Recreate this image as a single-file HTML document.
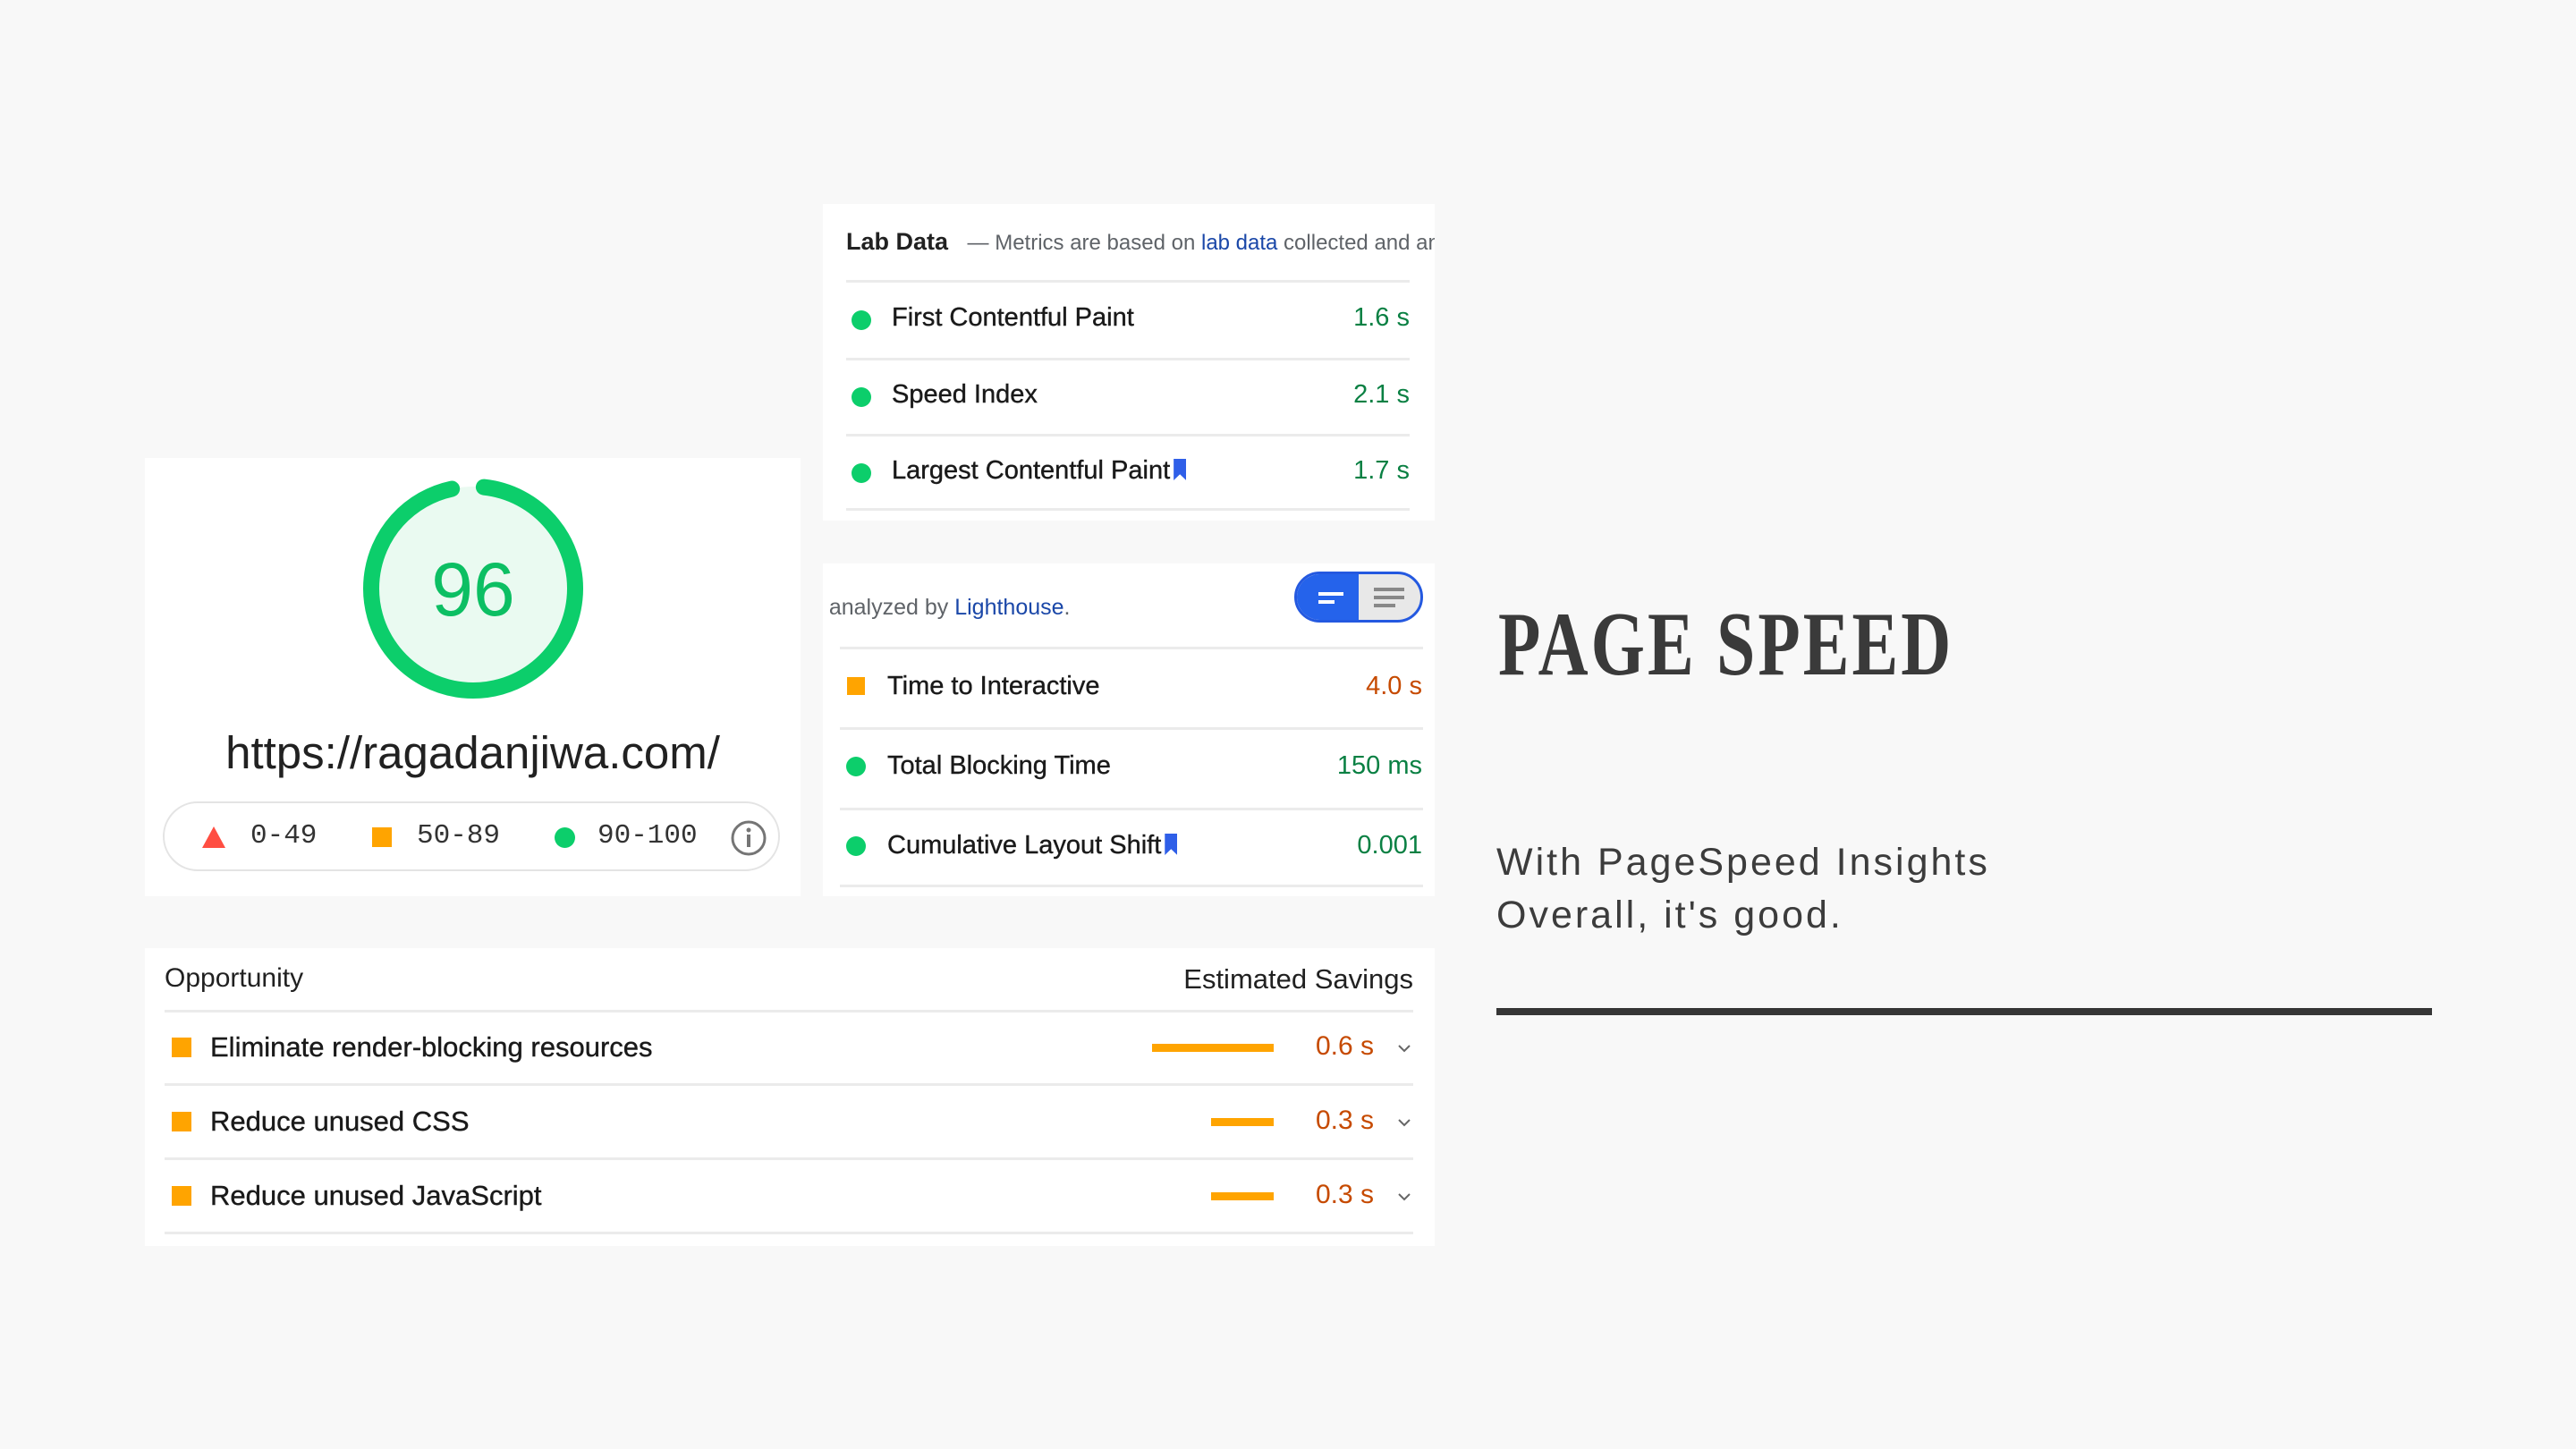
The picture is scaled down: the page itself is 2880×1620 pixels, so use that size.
<!DOCTYPE html>
<html><head><meta charset="utf-8"><style>
body{margin:0;width:2880px;height:1620px;background:#f8f8f8;position:relative;overflow:hidden;font-family:"Liberation Sans",sans-serif;color:#212121}
.card{position:absolute;background:#fff}
.abs{position:absolute;white-space:nowrap}
.sep{position:absolute;height:3px;background:#ebebeb}
.dot{position:absolute;width:22px;height:22px;border-radius:50%;background:#0cce6b}
.sq{position:absolute;width:20px;height:20px;background:#ffa400}
.lbl{position:absolute;font-size:29px;color:#1a1a1a;white-space:nowrap;-webkit-text-stroke:0.4px #1a1a1a}
.val{position:absolute;font-size:29px;white-space:nowrap;text-align:right}
.g{color:#0a8043}.o{color:#c64a00}
.bm{display:inline-block;width:14px;height:24px;background:#2f5fe8;margin-left:4px;vertical-align:-2px;clip-path:polygon(0 0,100% 0,100% 100%,50% 72%,0 100%)}
</style></head><body>

<!-- score card -->
<div class="card" style="left:162px;top:512px;width:733px;height:490px">
<svg class="abs" style="left:242px;top:20px" width="250" height="250" viewBox="0 0 250 250">
<circle cx="125" cy="126" r="114" fill="#eafaf1"/>
<circle cx="125" cy="126" r="114" fill="none" stroke="#0cce6b" stroke-width="18" stroke-linecap="round" stroke-dasharray="680 80" transform="rotate(-84 125 126)"/>
<text x="125" y="156" text-anchor="middle" font-family="Liberation Sans" font-size="84" fill="#0cbf63">96</text>
</svg>
<div class="abs" style="left:0;width:733px;text-align:center;top:300px;font-size:51px;color:#212121">https://ragadanjiwa.com/</div>
<div class="abs" style="left:20px;top:384px;width:690px;height:78px;border:2px solid #e4e4e4;border-radius:42px;box-sizing:border-box;font-family:'Liberation Mono',monospace;font-size:31px;color:#333">
<svg class="abs" style="left:42px;top:26px" width="26" height="24"><polygon points="13,0 26,24 0,24" fill="#ff4e42"/></svg>
<span class="abs" style="left:96px;top:19px">0-49</span>
<div class="abs" style="left:232px;top:27px;width:22px;height:22px;background:#ffa400"></div>
<span class="abs" style="left:282px;top:19px">50-89</span>
<div class="abs" style="left:436px;top:27px;width:23px;height:23px;border-radius:50%;background:#0cce6b"></div>
<span class="abs" style="left:484px;top:19px">90-100</span>
<svg class="abs" style="left:632px;top:18px" width="42" height="42"><circle cx="21" cy="21" r="18" fill="none" stroke="#757575" stroke-width="3"/><rect x="19" y="17" width="4" height="14" fill="#757575"/><circle cx="21" cy="12" r="2.5" fill="#757575"/></svg>
</div>
</div>

<!-- lab data -->
<div class="card" style="left:920px;top:228px;width:684px;height:354px;overflow:hidden">
<div class="abs" style="left:26px;top:27px;font-size:27px;font-weight:bold;color:#212121">Lab Data <span style="font-weight:normal;font-size:24px;color:#5f6368;margin-left:14px">— Metrics are based on <span style="color:#1a47a8">lab data</span> collected and analyzed</span></div>
<div class="sep" style="left:26px;top:85px;width:630px"></div>
<div class="dot" style="left:32px;top:119px"></div><div class="lbl" style="left:77px;top:111px">First Contentful Paint</div><div class="val g" style="right:28px;top:111px">1.6 s</div>
<div class="sep" style="left:26px;top:172px;width:630px"></div>
<div class="dot" style="left:32px;top:205px"></div><div class="lbl" style="left:77px;top:197px">Speed Index</div><div class="val g" style="right:28px;top:197px">2.1 s</div>
<div class="sep" style="left:26px;top:257px;width:630px"></div>
<div class="dot" style="left:32px;top:290px"></div><div class="lbl" style="left:77px;top:282px">Largest Contentful Paint<span class="bm"></span></div><div class="val g" style="right:28px;top:282px">1.7 s</div>
<div class="sep" style="left:26px;top:340px;width:630px"></div>
</div>

<!-- second card -->
<div class="card" style="left:920px;top:630px;width:684px;height:372px;overflow:hidden">
<div class="abs" style="left:-14px;top:35px;font-size:25px;color:#5f6368">d analyzed by <span style="color:#1a47a8">Lighthouse</span>.</div>
<div class="abs" style="left:527px;top:9px;width:144px;height:57px;border-radius:29px;border:3px solid #2459e0;box-sizing:border-box;overflow:hidden;background:#e8e8e8">
<div class="abs" style="left:0;top:0;width:69px;height:51px;background:#2563eb"></div>
<div class="abs" style="left:24px;top:20px;width:28px;height:4px;background:#fff"></div>
<div class="abs" style="left:24px;top:29px;width:18px;height:4px;background:#fff"></div>
<div class="abs" style="left:86px;top:15px;width:34px;height:4px;background:#888"></div>
<div class="abs" style="left:86px;top:24px;width:34px;height:4px;background:#888"></div>
<div class="abs" style="left:86px;top:33px;width:24px;height:4px;background:#888"></div>
</div>
<div class="sep" style="left:19px;top:93px;width:652px"></div>
<div class="sq" style="left:27px;top:127px"></div><div class="lbl" style="left:72px;top:121px">Time to Interactive</div><div class="val o" style="right:14px;top:121px">4.0 s</div>
<div class="sep" style="left:19px;top:183px;width:652px"></div>
<div class="dot" style="left:26px;top:216px"></div><div class="lbl" style="left:72px;top:210px">Total Blocking Time</div><div class="val g" style="right:14px;top:210px">150 ms</div>
<div class="sep" style="left:19px;top:273px;width:652px"></div>
<div class="dot" style="left:26px;top:305px"></div><div class="lbl" style="left:72px;top:299px">Cumulative Layout Shift<span class="bm"></span></div><div class="val g" style="right:14px;top:299px">0.001</div>
<div class="sep" style="left:19px;top:359px;width:652px"></div>
</div>

<!-- opportunity -->
<div class="card" style="left:162px;top:1060px;width:1442px;height:333px">
<div class="abs" style="left:22px;top:17px;font-size:30px">Opportunity</div>
<div class="abs" style="right:24px;top:17px;font-size:31px">Estimated Savings</div>
<div class="sep" style="left:22px;top:69px;width:1396px"></div>
<div class="sq" style="left:30px;top:100px;width:22px;height:22px"></div><div class="lbl" style="left:73px;top:93px;font-size:31px">Eliminate render-blocking resources</div>
<div class="abs" style="left:1126px;top:107px;width:136px;height:9px;background:#ffa400"></div><div class="val o" style="right:68px;top:93px;font-size:30px">0.6 s</div>
<div class="sep" style="left:22px;top:151px;width:1396px"></div>
<div class="sq" style="left:30px;top:183px;width:22px;height:22px"></div><div class="lbl" style="left:73px;top:176px;font-size:31px">Reduce unused CSS</div>
<div class="abs" style="left:1192px;top:190px;width:70px;height:9px;background:#ffa400"></div><div class="val o" style="right:68px;top:176px;font-size:30px">0.3 s</div>
<div class="sep" style="left:22px;top:234px;width:1396px"></div>
<div class="sq" style="left:30px;top:266px;width:22px;height:22px"></div><div class="lbl" style="left:73px;top:259px;font-size:31px">Reduce unused JavaScript</div>
<div class="abs" style="left:1192px;top:273px;width:70px;height:9px;background:#ffa400"></div><div class="val o" style="right:68px;top:259px;font-size:30px">0.3 s</div>
<div class="sep" style="left:22px;top:317px;width:1396px"></div>
<svg class="abs" style="left:1400px;top:106px" width="16" height="12"><path d="M2 3 L8 9 L14 3" fill="none" stroke="#666" stroke-width="2"/></svg>
<svg class="abs" style="left:1400px;top:189px" width="16" height="12"><path d="M2 3 L8 9 L14 3" fill="none" stroke="#666" stroke-width="2"/></svg>
<svg class="abs" style="left:1400px;top:272px" width="16" height="12"><path d="M2 3 L8 9 L14 3" fill="none" stroke="#666" stroke-width="2"/></svg>
</div>

<!-- right text -->
<div class="abs" style="left:1675px;top:662px;font-family:'Liberation Serif',serif;font-weight:bold;font-size:102px;color:#3a3a3a;transform:scaleX(0.76);transform-origin:left top;letter-spacing:4px">PAGE SPEED</div>
<div class="abs" style="left:1673px;top:935px;font-size:43px;line-height:59px;color:#3c3c3c;letter-spacing:3px">With PageSpeed Insights<br>Overall, it's good.</div>
<div class="abs" style="left:1673px;top:1127px;width:1046px;height:8px;background:#363636"></div>
</body></html>
